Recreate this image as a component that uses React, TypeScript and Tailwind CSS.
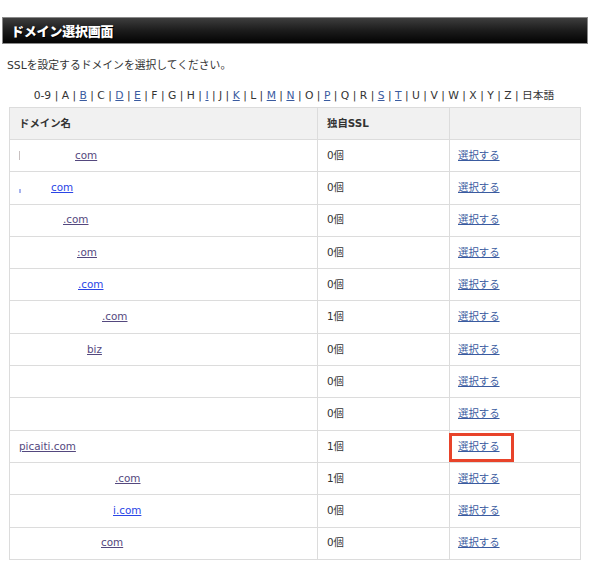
import React from "react";

const letters: { t: string; link: boolean }[] = [
  { t: "0-9", link: false },
  { t: "A", link: false },
  { t: "B", link: true },
  { t: "C", link: false },
  { t: "D", link: true },
  { t: "E", link: true },
  { t: "F", link: false },
  { t: "G", link: false },
  { t: "H", link: false },
  { t: "I", link: true },
  { t: "J", link: false },
  { t: "K", link: true },
  { t: "L", link: false },
  { t: "M", link: true },
  { t: "N", link: true },
  { t: "O", link: false },
  { t: "P", link: true },
  { t: "Q", link: false },
  { t: "R", link: false },
  { t: "S", link: true },
  { t: "T", link: true },
  { t: "U", link: false },
  { t: "V", link: false },
  { t: "W", link: false },
  { t: "X", link: false },
  { t: "Y", link: false },
  { t: "Z", link: false },
  { t: "日本語", link: false },
];

type Row = { text: string; ml: number; blue?: boolean; mark?: "gray" | "blue"; count: string; box?: boolean };

const rows: Row[] = [
  { text: "com", ml: 56, mark: "gray", count: "0個" },
  { text: "com", ml: 32, blue: true, mark: "blue", count: "0個" },
  { text: ".com", ml: 44, count: "0個" },
  { text: ":om", ml: 58, count: "0個" },
  { text: ".com", ml: 59, blue: true, count: "0個" },
  { text: ".com", ml: 83, count: "1個" },
  { text: "biz", ml: 68, count: "0個" },
  { text: "", ml: 0, count: "0個" },
  { text: "", ml: 0, count: "0個" },
  { text: "picaiti.com", ml: 0, count: "1個", box: true },
  { text: ".com", ml: 96, count: "1個" },
  { text: "i.com", ml: 94, blue: true, count: "0個" },
  { text: "com", ml: 82, count: "0個" },
];

const FONT = { fontFamily: '"DejaVu Sans", Verdana, "Noto Sans CJK JP", sans-serif' };

export default function App() {
  return (
    <div className="w-[600px] h-[581px] bg-white text-[#333] text-[10.4px]" style={FONT}>
      <div className="pt-[17px] pl-[2px] w-[588px]">
        <div className="h-[27px] border border-[#8a8a8a] bg-gradient-to-b from-[#3e3e3e] via-[#1c1c1c] to-[#050505] flex items-center pl-[8px]">
          <span
            className="text-white text-[13px] font-bold tracking-[-0.2px]"
            style={{ fontFamily: '"Noto Sans CJK JP", sans-serif', fontWeight: 900, textShadow: "1px 1px 0 #000" }}
          >
            ドメイン選択画面
          </span>
        </div>
        <div className="pl-[5px] pt-[15px] h-[36px] flex items-start">
          <span className="leading-[14px] text-[10.8px]">SSLを設定するドメインを選択してください。</span>
        </div>
        <div className="h-[27px] flex justify-center items-start pr-[2px] pt-[9px]">
          <span className="leading-[14px] whitespace-nowrap text-[10.75px]">
            {letters.map((l, i) => (
              <React.Fragment key={i}>
                {i > 0 && <span> | </span>}
                {l.link ? <span className="text-[#3a5ba0] underline">{l.t}</span> : <span>{l.t}</span>}
              </React.Fragment>
            ))}
          </span>
        </div>
        <div className="pl-[7px]">
          <table className="w-[571px] border-collapse border border-[#dcdcdc] table-fixed">
            <colgroup>
              <col className="w-[308px]" />
              <col className="w-[132px]" />
              <col className="w-[131px]" />
            </colgroup>
            <thead>
              <tr className="h-[32px] bg-[#f1f1f1]">
                <th className="border border-[#dcdcdc] text-left font-bold pl-[9px]">ドメイン名</th>
                <th className="border border-[#dcdcdc] text-left font-bold pl-[9px]">独自SSL</th>
                <th className="border border-[#dcdcdc]"></th>
              </tr>
            </thead>
            <tbody>
              {rows.map((r, i) => (
                <tr key={i} className="h-[32.3px]">
                  <td className="border border-[#dcdcdc] pl-[9px] p-0">
                    <div className="flex items-center">
                      {r.mark === "gray" && <span className="inline-block w-[1px] h-[9px] bg-[#c8c0c0] mr-[-1px]" />}
                      {r.mark === "blue" && <span className="inline-block w-[2px] h-[4px] mt-[6px] bg-[#a8b4ee] mr-[-2px]" />}
                      {r.text && (
                        <span
                          className={`underline ${r.blue ? "text-[#2a45e6]" : "text-[#54487e]"}`}
                          style={{ marginLeft: r.ml }}
                        >
                          {r.text}
                        </span>
                      )}
                    </div>
                  </td>
                  <td className="border border-[#dcdcdc] pl-[9px]">{r.count}</td>
                  <td className="border border-[#dcdcdc] pl-[8px] relative">
                    <span className="text-[#3a5ba0] underline">選択する</span>
                    {r.box && (
                      <div className="absolute left-[-1px] top-[2px] w-[65px] h-[29px] border-[3px] border-[#e8432a]" />
                    )}
                  </td>
                </tr>
              ))}
            </tbody>
          </table>
        </div>
      </div>
    </div>
  );
}
